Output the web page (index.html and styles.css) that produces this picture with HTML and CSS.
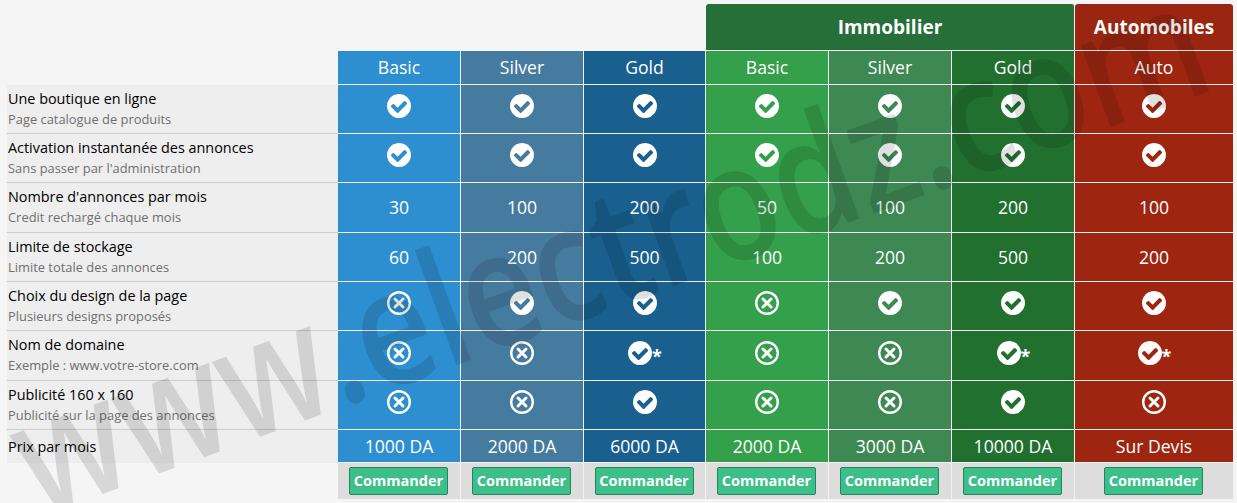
FILE: index.html
```html
<!DOCTYPE html>
<html lang="fr">
<head>
<meta charset="utf-8">
<title>Tarifs</title>
<link rel="stylesheet" href="styles.css">
</head>
<body>
<svg class="defs" width="0" height="0" aria-hidden="true">
  <symbol id="ok" viewBox="0 0 1792 1792"><path fill-rule="evenodd" d="M1412 734q0-28-18-46l-91-90q-19-19-45-19t-45 19l-408 407-226-226q-19-19-45-19t-45 19l-91 90q-18 18-18 46 0 27 18 45l362 362q19 19 45 19 27 0 46-19l543-543q18-18 18-45zm252 162q0 209-103 385.500t-279.500 279.500-385.500 103-385.500-103-279.500-279.500-103-385.500 103-385.500 279.500-279.500 385.500-103 385.500 103 279.500 279.500 103 385.500z"/></symbol>
  <symbol id="no" viewBox="0 0 28 28"><circle class="ring" cx="14" cy="14" r="10.8"/><path class="cross" d="M10 10l8 8M18 10l-8 8"/></symbol>
</svg>
<main class="plans">
  <div class="blank-top"></div>
  <div class="cell group c-imm">Immobilier</div>
  <div class="cell group c-auto">Automobiles</div>

  <div class="blank-sub"></div>
  <div class="cell c1">Basic</div><div class="cell c2">Silver</div><div class="cell c3">Gold</div>
  <div class="cell c4">Basic</div><div class="cell c5">Silver</div><div class="cell c6">Gold</div>
  <div class="cell c7">Auto</div>

  <div class="label"><b>Une boutique en ligne</b><small>Page catalogue de produits</small></div>
  <div class="cell c1"><svg class="ic"><use href="#ok"/></svg></div><div class="cell c2"><svg class="ic"><use href="#ok"/></svg></div><div class="cell c3"><svg class="ic"><use href="#ok"/></svg></div>
  <div class="cell c4"><svg class="ic"><use href="#ok"/></svg></div><div class="cell c5"><svg class="ic"><use href="#ok"/></svg></div><div class="cell c6"><svg class="ic"><use href="#ok"/></svg></div>
  <div class="cell c7"><svg class="ic"><use href="#ok"/></svg></div>

  <div class="label"><b>Activation instantanée des annonces</b><small>Sans passer par l'administration</small></div>
  <div class="cell c1"><svg class="ic"><use href="#ok"/></svg></div><div class="cell c2"><svg class="ic"><use href="#ok"/></svg></div><div class="cell c3"><svg class="ic"><use href="#ok"/></svg></div>
  <div class="cell c4"><svg class="ic"><use href="#ok"/></svg></div><div class="cell c5"><svg class="ic"><use href="#ok"/></svg></div><div class="cell c6"><svg class="ic"><use href="#ok"/></svg></div>
  <div class="cell c7"><svg class="ic"><use href="#ok"/></svg></div>

  <div class="label"><b>Nombre d'annonces par mois</b><small>Credit rechargé chaque mois</small></div>
  <div class="cell c1">30</div><div class="cell c2">100</div><div class="cell c3">200</div>
  <div class="cell c4">50</div><div class="cell c5">100</div><div class="cell c6">200</div>
  <div class="cell c7">100</div>

  <div class="label"><b>Limite de stockage</b><small>Limite totale des annonces</small></div>
  <div class="cell c1">60</div><div class="cell c2">200</div><div class="cell c3">500</div>
  <div class="cell c4">100</div><div class="cell c5">200</div><div class="cell c6">500</div>
  <div class="cell c7">200</div>

  <div class="label"><b>Choix du design de la page</b><small>Plusieurs designs proposés</small></div>
  <div class="cell c1"><svg class="ic"><use href="#no"/></svg></div><div class="cell c2"><svg class="ic"><use href="#ok"/></svg></div><div class="cell c3"><svg class="ic"><use href="#ok"/></svg></div>
  <div class="cell c4"><svg class="ic"><use href="#no"/></svg></div><div class="cell c5"><svg class="ic"><use href="#ok"/></svg></div><div class="cell c6"><svg class="ic"><use href="#ok"/></svg></div>
  <div class="cell c7"><svg class="ic"><use href="#ok"/></svg></div>

  <div class="label"><b>Nom de domaine</b><small>Exemple : www.votre-store.com</small></div>
  <div class="cell c1"><svg class="ic"><use href="#no"/></svg></div><div class="cell c2"><svg class="ic"><use href="#no"/></svg></div><div class="cell c3"><svg class="ic"><use href="#ok"/></svg><span class="star">*</span></div>
  <div class="cell c4"><svg class="ic"><use href="#no"/></svg></div><div class="cell c5"><svg class="ic"><use href="#no"/></svg></div><div class="cell c6"><svg class="ic"><use href="#ok"/></svg><span class="star">*</span></div>
  <div class="cell c7"><svg class="ic"><use href="#ok"/></svg><span class="star">*</span></div>

  <div class="label"><b>Publicité 160 x 160</b><small>Publicité sur la page des annonces</small></div>
  <div class="cell c1"><svg class="ic"><use href="#no"/></svg></div><div class="cell c2"><svg class="ic"><use href="#no"/></svg></div><div class="cell c3"><svg class="ic"><use href="#ok"/></svg></div>
  <div class="cell c4"><svg class="ic"><use href="#no"/></svg></div><div class="cell c5"><svg class="ic"><use href="#no"/></svg></div><div class="cell c6"><svg class="ic"><use href="#ok"/></svg></div>
  <div class="cell c7"><svg class="ic"><use href="#no"/></svg></div>

  <div class="label label-price"><b>Prix par mois</b></div>
  <div class="cell c1">1000 DA</div><div class="cell c2">2000 DA</div><div class="cell c3">6000 DA</div>
  <div class="cell c4">2000 DA</div><div class="cell c5">3000 DA</div><div class="cell c6">10000 DA</div>
  <div class="cell c7">Sur Devis</div>

  <div class="blank-buy"></div>
  <div class="buy"><a class="btn">Commander</a></div><div class="buy"><a class="btn">Commander</a></div><div class="buy"><a class="btn">Commander</a></div>
  <div class="buy"><a class="btn">Commander</a></div><div class="buy"><a class="btn">Commander</a></div><div class="buy"><a class="btn">Commander</a></div>
  <div class="buy"><a class="btn">Commander</a></div>
</main>
<div class="overlay"><div class="watermark">www.electrodz.com</div></div>
</body>
</html>
```
FILE: styles.css
```css
html, body {
  margin: 0;
  height: 503px;
  overflow: hidden;
}
body {
  position: relative;
  background: #f5f5f5;
  font-family: "Open Sans", "Liberation Sans", sans-serif;
  color: #fff;
}
.defs {
  position: absolute;
}
.plans {
  display: grid;
  grid-template-columns: 331px 123px 123px 122px 123px 123px 123px 158px;
  grid-template-rows: 47px 34px 49px 49px 50px 49px 49px 50px 49px 33px 36px;
  padding: 4px 4px 0 7px;
}
.blank-top {
  grid-column: 1 / span 4;
}
.cell {
  display: flex;
  align-items: center;
  justify-content: center;
  box-sizing: border-box;
  padding-bottom: 1px;
  border-right: 1px solid #f2f2f2;
  border-bottom: 1px solid #f2f2f2;
  font-size: 17.6px;
}
.group {
  font-size: 19px;
  font-weight: 700;
}
.c-imm {
  grid-column: span 3;
  background: #266f38;
  border-radius: 3px 3px 0 0;
}
.c-auto {
  background: #9a2510;
  border-radius: 3px 3px 0 0;
  border-right: 0;
}
.c1 { background: #2e8fd0; }
.c2 { background: #467ba0; }
.c3 { background: #19608f; }
.c4 { background: #35a04b; }
.c5 { background: #3d8853; }
.c6 { background: #21702f; }
.c7 { background: #9e2510; border-right: 0; }
.label {
  display: flex;
  flex-direction: column;
  box-sizing: border-box;
  padding: 3.5px 0 0 1px;
  background: #eee;
  border-bottom: 1px solid #ccc;
  color: #000;
}
.label b {
  font-weight: 400;
  font-size: 14.4px;
  line-height: 20px;
}
.label small {
  margin-top: 1.5px;
  font-size: 12.9px;
  line-height: 18px;
  color: #6f6f6f;
}
.label-price {
  padding-top: 7px;
  border-bottom: 0;
}
.ic {
  width: 28px;
  height: 28px;
  fill: #fff;
  margin-top: -5px;
}
.ring {
  fill: none;
  stroke: #fff;
  stroke-width: 2.4;
}
.cross {
  fill: none;
  stroke: #fff;
  stroke-width: 3;
  stroke-linecap: round;
}
.star {
  margin: 2px 0 0 -2px;
  font-size: 18px;
  font-weight: 700;
  line-height: 1;
  width: 11px;
}
.buy {
  display: flex;
  align-items: flex-start;
  justify-content: center;
  box-sizing: border-box;
  padding: 4px 1px 0 0;
  background: #ddd;
  border-right: 1px solid #f2f2f2;
}
.buy:last-child {
  border-right: 0;
}
.btn {
  box-sizing: border-box;
  width: 99px;
  height: 28px;
  border: 1px solid #25845f;
  border-radius: 2px;
  background: #3cbf88;
  font-size: 14.5px;
  font-weight: 700;
  line-height: 26px;
  text-align: center;
}
.overlay {
  position: absolute;
  inset: 0;
  overflow: hidden;
  pointer-events: none;
}
.watermark {
  position: absolute;
  left: 44px;
  top: 403px;
  white-space: nowrap;
  font-size: 132px;
  font-weight: 600;
  line-height: 1;
  letter-spacing: 0;
  color: rgba(0, 0, 0, 0.12);
  transform: rotate(-20deg) scale(1, 1.22);
  transform-origin: left bottom;
}
```
